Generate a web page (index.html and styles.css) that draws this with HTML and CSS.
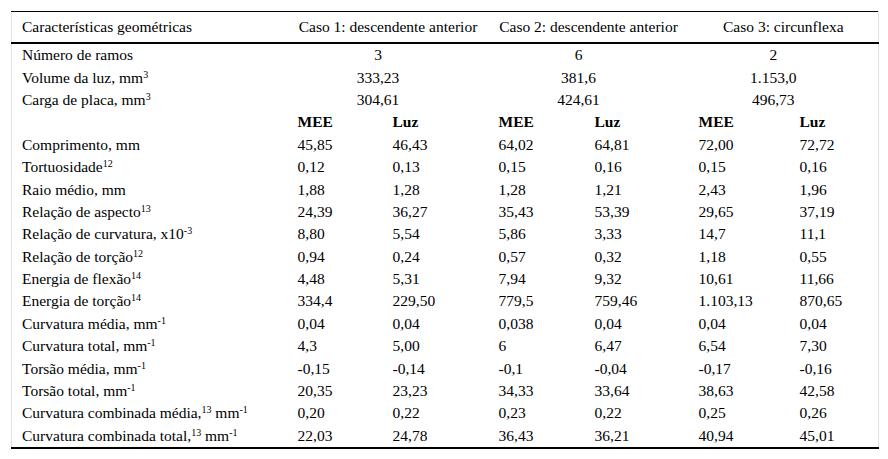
FILE: index.html
```html
<!DOCTYPE html>
<html lang="pt">
<head>
<meta charset="utf-8">
<title>Características geométricas</title>
<link rel="stylesheet" href="styles.css">
</head>
<body>
<table class="geo">
  <colgroup>
    <col class="c-label">
    <col class="c1a"><col class="c1b">
    <col class="c2a"><col class="c2b">
    <col class="c3a"><col class="c3b">
  </colgroup>
  <thead>
    <tr class="head">
      <th class="lbl">Características geométricas</th>
      <th colspan="2" class="case">Caso 1: descendente anterior</th>
      <th colspan="2" class="case">Caso 2: descendente anterior</th>
      <th colspan="2" class="case">Caso 3: circunflexa</th>
    </tr>
  </thead>
  <tbody>
    <tr><td class="lbl">Número de ramos</td><td colspan="2" class="mid">3</td><td colspan="2" class="mid">6</td><td colspan="2" class="mid">2</td></tr>
    <tr><td class="lbl">Volume da luz, mm<sup>3</sup></td><td colspan="2" class="mid">333,23</td><td colspan="2" class="mid">381,6</td><td colspan="2" class="mid">1.153,0</td></tr>
    <tr><td class="lbl">Carga de placa, mm<sup>3</sup></td><td colspan="2" class="mid">304,61</td><td colspan="2" class="mid">424,61</td><td colspan="2" class="mid">496,73</td></tr>
    <tr class="sub"><td class="lbl"></td><td>MEE</td><td>Luz</td><td>MEE</td><td>Luz</td><td>MEE</td><td>Luz</td></tr>
    <tr><td class="lbl">Comprimento, mm</td><td>45,85</td><td>46,43</td><td>64,02</td><td>64,81</td><td>72,00</td><td>72,72</td></tr>
    <tr><td class="lbl">Tortuosidade<sup>12</sup></td><td>0,12</td><td>0,13</td><td>0,15</td><td>0,16</td><td>0,15</td><td>0,16</td></tr>
    <tr><td class="lbl">Raio médio, mm</td><td>1,88</td><td>1,28</td><td>1,28</td><td>1,21</td><td>2,43</td><td>1,96</td></tr>
    <tr><td class="lbl">Relação de aspecto<sup>13</sup></td><td>24,39</td><td>36,27</td><td>35,43</td><td>53,39</td><td>29,65</td><td>37,19</td></tr>
    <tr><td class="lbl">Relação de curvatura, x10<sup>-3</sup></td><td>8,80</td><td>5,54</td><td>5,86</td><td>3,33</td><td>14,7</td><td>11,1</td></tr>
    <tr><td class="lbl">Relação de torção<sup>12</sup></td><td>0,94</td><td>0,24</td><td>0,57</td><td>0,32</td><td>1,18</td><td>0,55</td></tr>
    <tr><td class="lbl">Energia de flexão<sup>14</sup></td><td>4,48</td><td>5,31</td><td>7,94</td><td>9,32</td><td>10,61</td><td>11,66</td></tr>
    <tr><td class="lbl">Energia de torção<sup>14</sup></td><td>334,4</td><td>229,50</td><td>779,5</td><td>759,46</td><td>1.103,13</td><td>870,65</td></tr>
    <tr><td class="lbl">Curvatura média, mm<sup>-1</sup></td><td>0,04</td><td>0,04</td><td>0,038</td><td>0,04</td><td>0,04</td><td>0,04</td></tr>
    <tr><td class="lbl">Curvatura total, mm<sup>-1</sup></td><td>4,3</td><td>5,00</td><td>6</td><td>6,47</td><td>6,54</td><td>7,30</td></tr>
    <tr><td class="lbl">Torsão média, mm<sup>-1</sup></td><td>-0,15</td><td>-0,14</td><td>-0,1</td><td>-0,04</td><td>-0,17</td><td>-0,16</td></tr>
    <tr><td class="lbl">Torsão total, mm<sup>-1</sup></td><td>20,35</td><td>23,23</td><td>34,33</td><td>33,64</td><td>38,63</td><td>42,58</td></tr>
    <tr><td class="lbl">Curvatura combinada média,<sup>13</sup> mm<sup>-1</sup></td><td>0,20</td><td>0,22</td><td>0,23</td><td>0,22</td><td>0,25</td><td>0,26</td></tr>
    <tr><td class="lbl">Curvatura combinada total,<sup>13</sup> mm<sup>-1</sup></td><td>22,03</td><td>24,78</td><td>36,43</td><td>36,21</td><td>40,94</td><td>45,01</td></tr>
  </tbody>
</table>
</body>
</html>
```

FILE: styles.css
```css
html, body {
  margin: 0;
  background: #ffffff;
}

body {
  padding: 11px;
  font-family: "Liberation Serif", "Times New Roman", serif;
  font-size: 15.5px;
  color: #000;
}

.geo {
  border-collapse: collapse;
  width: 867px;
  table-layout: fixed;
  border-top: 1px solid #000;
  border-bottom: 2px solid #000;
  border-left: 1px solid #e2e2e2;
  border-right: 1px solid #e2e2e2;
}

.c-label { width: 276px; }
.c1a { width: 95px; }
.c1b { width: 106px; }
.c2a { width: 96px; }
.c2b { width: 104px; }
.c3a { width: 101px; }
.c3b { width: 89px; }

.geo th,
.geo td {
  padding: 0 0 0 10px;
  text-align: left;
  vertical-align: middle;
  white-space: nowrap;
  line-height: 18px;
}

.geo th {
  font-weight: normal;
}

.head th {
  height: 30px;
  border-bottom: 2px solid #000;
}

.head th.case {
  text-align: center;
  padding: 0 10px;
}

.geo tbody td {
  height: 22.4px;
}

.geo td.mid {
  text-align: center;
  padding: 0 20px 0 0;
}

.sub td {
  font-weight: bold;
}

sup {
  font-size: 10px;
  line-height: 0;
  vertical-align: 5px;
}
```
